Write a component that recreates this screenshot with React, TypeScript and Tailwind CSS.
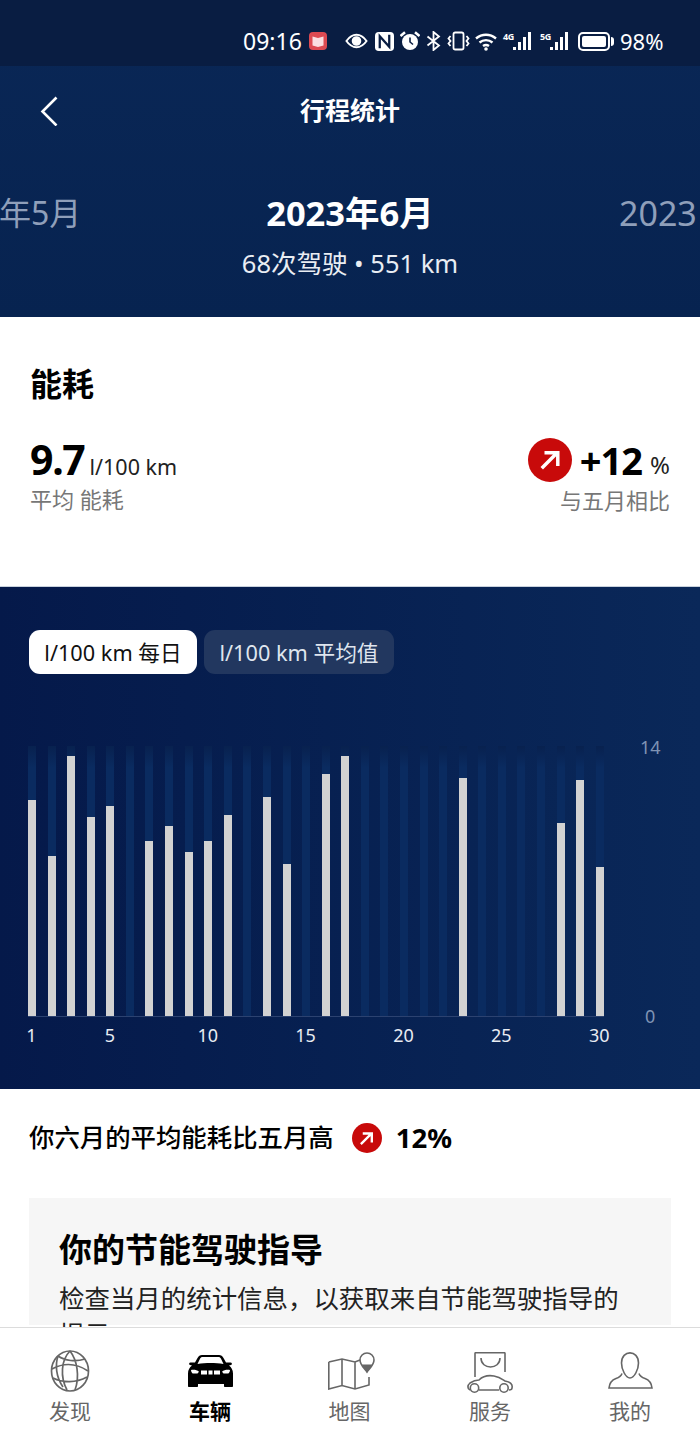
const font = "font-['Noto_Sans','Noto_Sans_CJK_SC',sans-serif]";

const bars = [
  215.8, 159.8, 260.5, 199.2, 210.2, 0, 175.2, 189.8, 163.8, 175.2, 200.8, 0, 219.5, 152.5, 0,
  241.8, 260.5, 0, 0, 0, 0, 0, 238.2, 0, 0, 0, 0, 193.5, 236.2, 148.8,
];

function UpArrow({ size }: { size: number }) {
  return (
    <span
      className="flex items-center justify-center rounded-full bg-[#c80a0a] shrink-0"
      style={{ width: size, height: size }}
    >
      <svg viewBox="0 0 24 24" className="w-[50%] h-[50%]" fill="none" stroke="white" strokeWidth="3.8">
        <path d="M3 21 19 5M6 4h14.500v14.500" />
      </svg>
    </span>
  );
}

function Signal({ label, className }: { label: string; className: string }) {
  return (
    <span className={`relative w-[30px] h-[19px] ${className}`}>
      <span className="absolute left-0 top-0 text-[9px] font-bold leading-[9px] tracking-[-0.5px]">{label}</span>
      <svg viewBox="0 0 20 19" className="absolute left-[10px] top-0 w-[20px] h-[19px]" fill="white">
        <rect x="0" y="15" width="3" height="3" />
        <rect x="5" y="10" width="3" height="8" />
        <rect x="10" y="5" width="3" height="13" />
        <rect x="15" y="0" width="3" height="18" />
      </svg>
    </span>
  );
}

function StatusBar() {
  return (
    <div className="h-[66px] bg-[#091d42] flex items-center pl-[243px] pt-[16px] text-white">
      <span className="text-[23px] leading-none w-[59px] whitespace-nowrap">09:16</span>
      <svg viewBox="0 0 18 18" className="ml-[7px] w-[18px] h-[18px]">
        <rect width="18" height="18" rx="4" fill="#dd4a52" />
        <path d="M3.500 4.500 9 6l5.500-1.500v9L9 15l-5.500-1.500Z" fill="#fbdfe2" />
      </svg>
      <svg viewBox="0 0 24 16" className="ml-[18px] w-[23px] h-[16px]" fill="none" stroke="white" strokeWidth="2">
        <path d="M1.500 8C5 3 8.500 1.500 12 1.500S19 3 22.500 8C19 13 15.500 14.500 12 14.500S5 13 1.500 8Z" />
        <circle cx="12" cy="8" r="4" fill="white" />
      </svg>
      <svg viewBox="0 0 20 20" className="ml-[7px] w-[19px] h-[19px]">
        <rect width="20" height="20" rx="4" fill="white" />
        <path d="M5 17V4.500l10 11V3" fill="none" stroke="#091d42" strokeWidth="2.400" />
      </svg>
      <svg viewBox="0 0 20 20" className="ml-[6px] w-[20px] h-[20px]">
        <circle cx="10" cy="11" r="8" fill="white" />
        <path d="M10 6.500V11l3 2.500" fill="none" stroke="#091d42" strokeWidth="1.600" />
        <path d="M.5 5 5 1.200M19.500 5 15 1.200" fill="none" stroke="white" strokeWidth="2.500" />
      </svg>
      <svg viewBox="0 0 15 20" className="ml-[6px] w-[15px] h-[20px]" fill="none" stroke="white" strokeWidth="1.800">
        <path d="M1.500 5.500 13 14.500 7.500 19V1L13 5.500 1.500 14.500" />
      </svg>
      <svg viewBox="0 0 23 20" className="ml-[6px] w-[23px] h-[20px]" fill="none" stroke="white" strokeWidth="1.800">
        <rect x="6.500" y="1.500" width="10" height="17" rx="1.800" />
        <path d="M3.500 5 1.500 7.500l2 2.500-2 2.500 2 2.500M19.500 5l2 2.500-2 2.500 2 2.500-2 2.500" />
      </svg>
      <svg viewBox="0 0 22 19" className="ml-[5px] w-[22px] h-[19px]" fill="none" stroke="white" strokeWidth="2.400">
        <path d="M1 6.500c6-5 14-5 20 0M4.500 10.500c3.800-3.200 9.200-3.200 13 0M8 14c1.800-1.300 4.200-1.300 6 0" />
        <circle cx="11" cy="17" r="1.800" fill="white" stroke="none" />
      </svg>
      <Signal label="4G" className="ml-[6px]" />
      <Signal label="5G" className="ml-[7px]" />
      <span className="ml-[8px] w-[32px] h-[19px] rounded-[5px] border-2 border-white p-[2px]">
        <span className="block w-full h-full rounded-[2px] bg-white" />
      </span>
      <span className="ml-[1px] w-[3px] h-[9px] rounded-r-sm bg-white" />
      <span className="ml-[6px] text-[22px] leading-none whitespace-nowrap">98%</span>
    </div>
  );
}

function Chart() {
  return (
    <div className="h-[503px] bg-gradient-to-r from-[#05194a] to-[#0a2859] pt-[43px] border-t border-[#c9d2dd]">
      <div className="pl-[29px] flex gap-[7px] text-[21.700px] leading-none">
        <div className="w-[168px] h-[44px] pt-[2px] rounded-[11px] bg-white text-[#111] flex items-center justify-center">
          l/100 km 每日
        </div>
        <div className="w-[190px] h-[44px] pt-[2px] rounded-[11px] bg-[#22375f] text-[#dfe5ee] flex items-center justify-center">
          l/100 km 平均值
        </div>
      </div>
      <div className="mt-[72px] pl-[28px] flex">
        <div className="w-[576px]">
          <div className="h-[271px] flex justify-between border-b border-[#2c4270]">
            {bars.map((h, i) => (
              <div
                key={i}
                className="w-[8px] h-[270px] bg-gradient-to-b from-[#08214f] from-0% to-[#0a2b60] to-[8%] flex flex-col justify-end"
              >
                {h > 0 && <div className="w-[8px] bg-[#d2d2d2]" style={{ height: h }} />}
              </div>
            ))}
          </div>
          <div className="flex justify-between mt-[7px] text-[18px] leading-[22px] text-[#e8ecf2]">
            {bars.map((_, i) => {
              const n = i + 1;
              return (
                <div key={i} className="w-[8px] h-[22px] flex justify-center">
                  {(n === 1 || n % 5 === 0) && <span className="whitespace-nowrap -ml-[1px]">{n}</span>}
                </div>
              );
            })}
          </div>
        </div>
        <div className="ml-[36px] h-[293px] -mt-[11px] flex flex-col justify-between text-[18px] leading-[24px] text-[#7f93b4]">
          <span>14</span>
          <span className="ml-[5px]">0</span>
        </div>
      </div>
    </div>
  );
}

function BottomNav() {
  const label = "text-[21px] leading-[28px] text-[#666]";
  const item = "flex-1 flex flex-col items-center";
  const box = "h-[47px] flex items-start";
  return (
    <div className="absolute left-0 right-0 bottom-0 h-[116px] bg-white border-t border-[#dcdcdc] flex pt-[22px]">
      <div className={item}>
        <div className={box}>
          <svg viewBox="0 0 40 42" className="w-[40px] h-[42px]" fill="none" stroke="#666" strokeWidth="1.700">
            <ellipse cx="20" cy="21" rx="18.500" ry="20" />
            <path d="M8 6c7 5 18 6 27 3M3 28c10 5 23 5 34-1M20 1c-9 9-10 26-3 39M20 1c7 9 10 25 5 39M8 6c-3 9-2 21 5 31M2 19c11-6 24-6 36 2" />
          </svg>
        </div>
        <span className={label}>发现</span>
      </div>
      <div className={item}>
        <div className={box}>
          <svg viewBox="0 0 47 32" className="w-[47px] h-[32px] mt-[5px]">
            <path
              fill="#000"
              d="M15 0h17c2 0 3.500 1 4.500 3L39 7.500h4.500c1.500 0 2 2 .5 2.500l-2 .5c2.500 2 4 4.500 4 8V31c0 .6-.4 1-1 1h-7c-.6 0-1-.4-1-1v-2H11v2c0 .6-.4 1-1 1H2c-.6 0-1-.4-1-1V18.500c0-3.500 1.500-6 4-8l-2-.5c-1.500-.5-1-2.500.5-2.500H8L10.500 3C11.500 1 13 0 15 0Z"
            />
            <path fill="#fff" d="M15.500 2h16c1 0 2 .6 2.500 1.800L36.500 9c-8-1.300-18-1.300-26 0L13 3.800c.5-1.200 1.500-1.800 2.500-1.800Z" />
            <path fill="#fff" d="M4 15c3-.5 6 0 8 1.800l-1.500 1.700H6c-1 0-2-2-2-3.500ZM43 15c-3-.5-6 0-8 1.800l1.500 1.700H41c1 0 2-2 2-3.500ZM14 15.500h6v4h-6zM21.500 15.500h4v4h-4zM27 15.500h6v4h-6z" />
          </svg>
        </div>
        <span className={`${label} font-bold text-black`}>车辆</span>
      </div>
      <div className={item}>
        <div className={`${box} ml-[4px]`}>
          <svg viewBox="0 0 48 38" className="w-[48px] h-[38px] mt-[2px]" fill="none" stroke="#666" strokeWidth="1.600">
            <path d="M.8 10 14 7l13 3 5-2M.8 10v27L14 33.500 27 37l14-4v-8M14 7v26.500M27 10v27" />
            <path d="M39 20c-2.500-3.500-7-7-7-12a7 7 0 0 1 14 0c0 5-4.500 8.500-7 12Z" />
            <path d="M33.500 12.500h11L39 20.500z" fill="#666" stroke="none" />
          </svg>
        </div>
        <span className={`${label} -ml-[1px]`}>地图</span>
      </div>
      <div className={item}>
        <div className={box}>
          <svg viewBox="0 0 46 41" className="w-[46px] h-[41px] mt-[2px]" fill="none" stroke="#666" strokeWidth="1.600">
            <path d="M8 25V1.500c0-.5.300-.8.800-.8h28.400c.5 0 .8.300.8.800V20M14 6c0 12 19 12 19 0" />
            <path d="M3 38c-3-1-2.500-5 0-7 3-2 6-3 9-3 4-4 9-5 15-4 6 1 8 3 11 5 5 1 8 3 7 7 0 1-1 2-3 2M12 38h20" />
            <circle cx="7.500" cy="36" r="4.200" />
            <circle cx="37" cy="36" r="4.200" />
          </svg>
        </div>
        <span className={label}>服务</span>
      </div>
      <div className={item}>
        <div className={box}>
          <svg viewBox="0 0 45 37" className="w-[45px] h-[37px] mt-[2px]" fill="none" stroke="#666" strokeWidth="1.600">
            <path d="M13.500 11c0-13.500 17-13.500 17 0 0 6-4 15-8.500 15s-8.500-9-8.500-15Z" />
            <path d="M14 21.500c-1 3-3 4-6 5-4 1.500-6.500 4.500-7 9.500h43c-.5-5-3-8-7-9.500-3-1-5-2-6-5" />
          </svg>
        </div>
        <span className={label}>我的</span>
      </div>
    </div>
  );
}

export default function App() {
  return (
    <div className={`relative h-[1443px] w-[700px] overflow-hidden bg-white ${font}`}>
      <div className="h-[317px] bg-gradient-to-b from-[#0a2756] to-[#072350]">
        <StatusBar />
        <div className="relative h-[90px] flex items-center justify-center text-white">
          <svg viewBox="0 0 18 30" className="absolute left-[40px] top-[30px] w-[18px] h-[30px]" fill="none" stroke="white" strokeWidth="2.600">
            <path d="M16.500 1.500 2.500 15.500l14 14" />
          </svg>
          <span className="text-[25px] font-bold leading-none -mt-[2px]">行程统计</span>
        </div>
        <div className="relative flex flex-col items-center text-white mt-[35px]">
          <span className="absolute left-0 top-[2px] -translate-x-[1px] text-[32px] leading-[40px] text-[#8f9fba] whitespace-nowrap">
            年5月
          </span>
          <span className="absolute left-[619px] top-[2px] text-[34px] leading-[40px] text-[#8f9fba] whitespace-nowrap">
            2023
          </span>
          <span className="text-[34.500px] font-bold leading-[44px]">2023年6月</span>
          <span className="text-[25.500px] leading-[32px] mt-[12px] text-[#e9edf3]">68次驾驶 • 551 km</span>
        </div>
      </div>

      <div className="h-[269px] px-[30px] pt-[47px] bg-white">
        <h2 className="text-[32px] font-bold leading-[40px] text-black">能耗</h2>
        <div className="mt-[33px] flex justify-between">
          <div>
            <div className="flex items-baseline h-[44px]">
              <span className="text-[41px] tracking-[-1.300px] font-bold leading-[44px] text-black">9.7</span>
              <span className="ml-[5px] text-[21.500px] text-[#222]">l/100 km</span>
            </div>
            <div className="text-[22px] leading-[28px] text-[#777] mt-[4px]">平均 能耗</div>
          </div>
          <div className="flex flex-col items-end mt-[1px]">
            <div className="flex items-center h-[44px]">
              <UpArrow size={44} />
              <span className="ml-[8px] text-[38px] tracking-[-1px] font-bold leading-[44px] text-black">+12</span>
              <span className="ml-[8px] mt-[9px] text-[24px] leading-none text-[#222]">%</span>
            </div>
            <div className="text-[22px] leading-[28px] text-[#777] mt-[4px]">与五月相比</div>
          </div>
        </div>
      </div>

      <Chart />

      <div className="px-[29px] pt-[32px] bg-white">
        <div className="flex items-center h-[34px]">
          <span className="text-[25.400px] font-medium leading-none text-black">你六月的平均能耗比五月高</span>
          <span className="ml-[18px]">
            <UpArrow size={30} />
          </span>
          <span className="ml-[14px] text-[27.500px] font-bold leading-none text-black">12%</span>
        </div>
        <div className="mt-[43px] h-[127px] w-[642px] bg-[#f6f6f6] pl-[30px] pr-[40px] pt-[30px]">
          <h3 className="text-[33px] font-bold leading-[44px] text-black">你的节能驾驶指导</h3>
          <p className="mt-[8px] text-[25.450px] leading-[36px] text-[#222]">
            检查当月的统计信息，以获取来自节能驾驶指导的提示。
          </p>
        </div>
      </div>

      <BottomNav />
    </div>
  );
}
